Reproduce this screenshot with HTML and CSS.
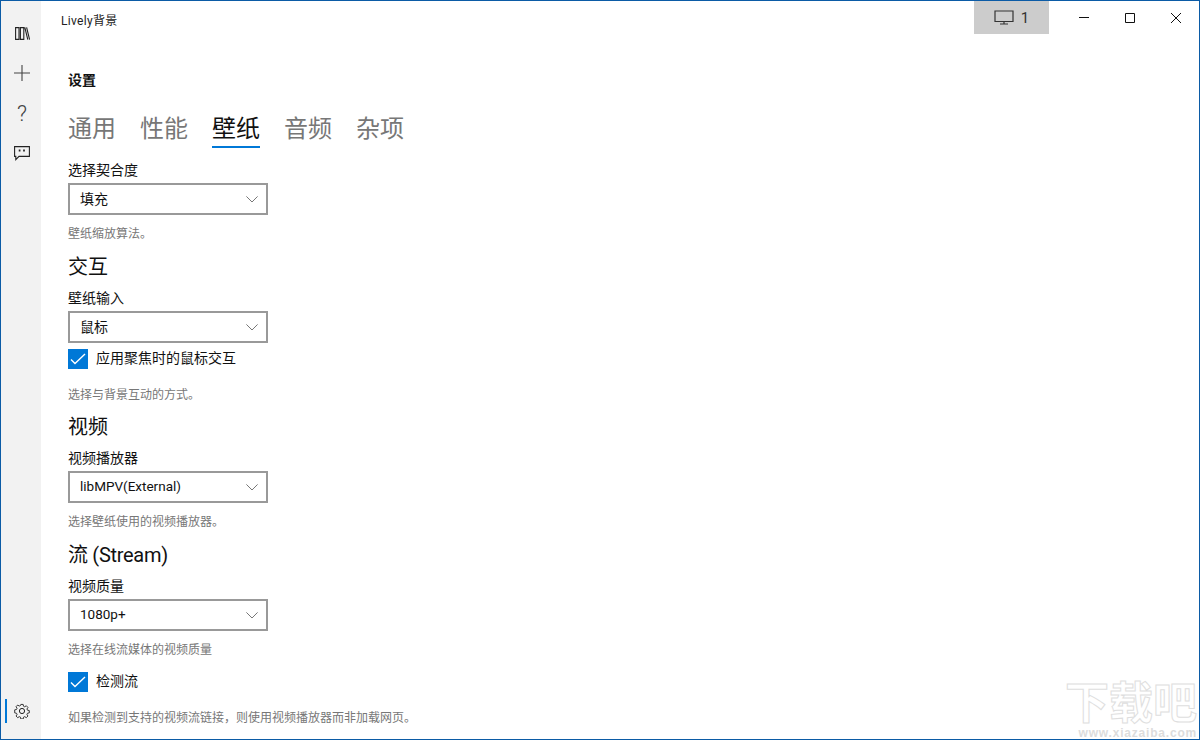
FILE: index.html
```html
<!DOCTYPE html>
<html lang="zh-CN">
<head>
  <meta charset="UTF-8">
  <title>Lively背景</title>
  <link rel="stylesheet" href="styles.css">
</head>
<body>
  <div class="window">
    <nav class="sidebar">
      <div class="nav-top">
        <span class="nav-item">
          <svg width="15" height="13" viewBox="0 0 15 13" fill="none" stroke="#222" stroke-width="1.1"><path d="M.6.600h3.400v11.800H.6zM5.400.600h3.400v11.800H5.400zM9.800.400l3 12.200M11.600.400l3 12.200"/></svg>
        </span>
        <span class="nav-item">
          <svg width="16" height="16" viewBox="0 0 16 16" stroke="#444" stroke-width="1.1"><path d="M8 0v16M0 8h16"/></svg>
        </span>
        <span class="nav-item nav-help">?</span>
        <span class="nav-item">
          <svg width="16" height="15" viewBox="0 0 16 15" fill="none" stroke="#222" stroke-width="1.1"><path d="M.6.600h14.800v9.800H5L1.800 13.600v-3.200H.6z"/><path d="M5.600 3.600v2M10 3.600v2" stroke-width="1.7"/></svg>
        </span>
      </div>
      <span class="nav-item nav-settings">
        <svg width="16" height="16" viewBox="0 0 16 16" fill="none" stroke="#222" stroke-width="1"><circle cx="8" cy="8" r="2.600"/><path d="M6.700.700h2.600l.4 2 1.300.6 1.800-1.100 1.800 1.800-1.100 1.800.6 1.300 2 .4v2.600l-2 .4-.6 1.300 1.100 1.800-1.800 1.800-1.800-1.100-1.300.6-.4 2H6.700l-.4-2-1.300-.6-1.800 1.100-1.800-1.800 1.100-1.800-.6-1.300-2-.4V6.700l2-.4.600-1.300-1.100-1.800 1.800-1.800 1.800 1.100 1.300-.6z" transform="translate(.8 .8) scale(.9)"/></svg>
      </span>
    </nav>

    <div class="main">
      <header class="titlebar">
        <span class="app-title">Lively背景</span>
        <div class="title-actions">
          <div class="screen-btn">
            <svg width="20" height="15" viewBox="0 0 20 15" fill="none" stroke="#333" stroke-width="1.2"><path d="M1 1h18v10.500H1zM10 11.500v2.500M6 14h8"/></svg>
            <span>1</span>
          </div>
          <div class="win-btn">
            <svg width="10" height="10" viewBox="0 0 10 10" stroke="#111"><path d="M0 4.500h10"/></svg>
          </div>
          <div class="win-btn">
            <svg width="10" height="10" viewBox="0 0 10 10" fill="none" stroke="#111"><path d="M.5.500h9v9h-9z"/></svg>
          </div>
          <div class="win-btn">
            <svg width="10" height="10" viewBox="0 0 10 10" stroke="#111"><path d="M0 0l10 10M10 0L0 10"/></svg>
          </div>
        </div>
      </header>

      <div class="content">
        <div class="page-title">设置</div>
        <div class="tabs">
          <span class="tab">通用</span>
          <span class="tab">性能</span>
          <span class="tab active">壁纸</span>
          <span class="tab">音频</span>
          <span class="tab">杂项</span>
        </div>

        <label class="field-label first">选择契合度</label>
        <div class="select"><span>填充</span><svg class="chev" width="12" height="7" viewBox="0 0 12 7" fill="none" stroke="#777"><path d="M.4.400L6 6 11.600.400"/></svg></div>
        <p class="hint">壁纸缩放算法。</p>

        <h2 class="section">交互</h2>
        <label class="field-label">壁纸输入</label>
        <div class="select"><span>鼠标</span><svg class="chev" width="12" height="7" viewBox="0 0 12 7" fill="none" stroke="#777"><path d="M.4.400L6 6 11.600.400"/></svg></div>
        <div class="check-row">
          <span class="check"><svg width="16" height="12" viewBox="0 0 16 12" fill="none" stroke="#fff" stroke-width="1.4"><path d="M1 6.500l4 4L15 1"/></svg></span>
          <span class="check-text">应用聚焦时的鼠标交互</span>
        </div>
        <p class="hint after-check">选择与背景互动的方式。</p>

        <h2 class="section">视频</h2>
        <label class="field-label">视频播放器</label>
        <div class="select"><span class="latin">libMPV(External)</span><svg class="chev" width="12" height="7" viewBox="0 0 12 7" fill="none" stroke="#777"><path d="M.4.400L6 6 11.600.400"/></svg></div>
        <p class="hint">选择壁纸使用的视频播放器。</p>

        <h2 class="section stream-head">流 (Stream)</h2>
        <label class="field-label">视频质量</label>
        <div class="select"><span class="latin">1080p+</span><svg class="chev" width="12" height="7" viewBox="0 0 12 7" fill="none" stroke="#777"><path d="M.4.400L6 6 11.600.400"/></svg></div>
        <p class="hint">选择在线流媒体的视频质量</p>
        <div class="check-row stream-check">
          <span class="check"><svg width="16" height="12" viewBox="0 0 16 12" fill="none" stroke="#fff" stroke-width="1.4"><path d="M1 6.500l4 4L15 1"/></svg></span>
          <span class="check-text">检测流</span>
        </div>
        <p class="hint after-check">如果检测到支持的视频流链接，则使用视频播放器而非加载网页。</p>
      </div>
    </div>

    <div class="watermark">
      <span class="wm-logo">下载吧</span>
      <span class="wm-url">www.xiazaiba.com</span>
    </div>
  </div>
</body>
</html>
```

FILE: styles.css
```css
html, body { margin: 0; height: 100%; }
body {
  background: #fff;
  font-family: Roboto, "Noto Sans CJK SC", sans-serif;
  color: #111;
  overflow: hidden;
}
.window {
  width: 1200px; height: 740px; box-sizing: border-box;
  border: 1px solid #0b5ba6;
  display: flex;
  position: relative;
  overflow: hidden;
}

/* left rail */
.sidebar {
  width: 40px; background: #f2f2f2;
  display: flex; flex-direction: column; justify-content: space-between;
  padding: 12px 0 16px 0; box-sizing: border-box;
}
.nav-top { display: flex; flex-direction: column; }
.nav-item {
  height: 40px;
  display: flex; align-items: center; justify-content: center;
  padding-left: 2px;
}
.nav-help { font-size: 22px; font-weight: 300; color: #444; font-family: Roboto, sans-serif; }
.nav-settings { height: 24px; position: relative; }
.nav-settings::before {
  content: ""; position: absolute; left: 4px; top: 0;
  width: 2px; height: 24px; background: #0078d7;
}

.main { flex: 1; min-width: 0; display: flex; flex-direction: column; }

/* title bar */
.titlebar { display: flex; justify-content: space-between; height: 33px; flex: none; }
.app-title { font-size: 12px; line-height: 16px; padding: 12px 0 0 20px; color: #222; letter-spacing: .3px; }
.title-actions { display: flex; }
.screen-btn {
  width: 75px; background: #cccccc;
  display: flex; align-items: center; justify-content: center; gap: 7px;
  font-size: 15px; color: #333; margin-right: 12px;
}
.win-btn { width: 46px; display: flex; align-items: center; justify-content: center; }

/* settings body */
.content { padding: 36px 0 0 27px; }
.page-title { font-size: 14px; font-weight: 700; line-height: 20px; }
.tabs { display: flex; gap: 24px; margin-top: 22px; }
.tab {
  font-size: 24px; line-height: 34px; color: #777;
  border-bottom: 2px solid transparent;
}
.tab.active { color: #111; border-bottom-color: #0078d7; }

.field-label { display: block; font-size: 14px; line-height: 20px; margin-bottom: 3px; }
.field-label.first { margin-top: 12px; }
.select {
  width: 200px; height: 32px; box-sizing: border-box;
  border: 2px solid #999;
  display: flex; align-items: center; justify-content: space-between;
  padding: 0 8px 2px 10px;
  font-size: 14px; color: #111;
}
.latin { font-size: 13.500px; }
.chev { flex: none; margin-top: 2px; }
.hint { margin: 10px 0 -2px 0; font-size: 12px; line-height: 18px; color: #777; }
.hint.after-check { margin: 17px 0 -3px 0; }
.section { margin: 11px 0 0 0; font-size: 20px; line-height: 30px; font-weight: 400; height: 28px; }
.stream-head { letter-spacing: -.3px; }
.section + .field-label { margin-top: 8px; }

.check-row { display: flex; align-items: center; gap: 8px; font-size: 14px; line-height: 18px; margin-top: 6px; }
.check {
  width: 20px; height: 20px; background: #0078d7;
  display: flex; align-items: center; justify-content: center;
}
.check-text { padding-bottom: 2px; }
.stream-check { margin-top: 15px; }

/* watermark over the corner */
.watermark {
  position: absolute; right: 2px; bottom: 0;
  display: flex; flex-direction: column; align-items: flex-end;
  pointer-events: none;
}
.wm-logo {
  font-size: 44px; line-height: 46px; font-weight: 700; color: #fff;
  -webkit-text-stroke: 1px #dedede;
}
.wm-url { font-size: 12px; line-height: 12px; color: #dcdcdc; font-family: "Liberation Sans", sans-serif; font-weight: 700; letter-spacing: .8px; }
```
